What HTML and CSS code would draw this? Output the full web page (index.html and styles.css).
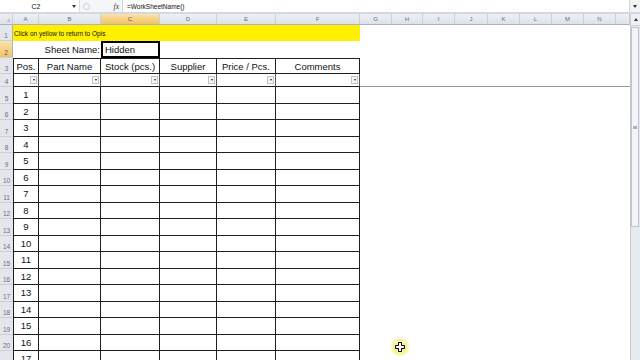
FILE: index.html
```html
<!DOCTYPE html>
<html lang="en">
<head>
  <meta charset="UTF-8">
  <title>Stock sheet</title>
  <link rel="stylesheet" href="styles.css">
</head>
<body>

  <div class="formula-bar">
    <div class="name-box">
      <span class="name">C2</span>
      <span class="nb-arrow"></span>
    </div>
    <div class="fb-tools">
      <span class="handle"></span>
      <i class="fx">fx</i>
    </div>
    <div class="formula">=WorkSheetName()</div>
    <div class="fb-expand"><span class="nb-arrow"></span></div>
  </div>

  <div class="workspace">
    <div class="sheet" id="sheet">
      <div class="row colhead">
        <div class="corner"><span class="corner-tri"></span></div>
        <div class="ch">A</div>
        <div class="ch">B</div>
        <div class="ch active">C</div>
        <div class="ch">D</div>
        <div class="ch">E</div>
        <div class="ch">F</div>
        <div class="ch">G</div>
        <div class="ch">H</div>
        <div class="ch">I</div>
        <div class="ch">J</div>
        <div class="ch">K</div>
        <div class="ch">L</div>
        <div class="ch">M</div>
        <div class="ch">N</div>
        <div class="ch"></div>
      </div>

      <div class="row r1">
        <div class="rh">1</div>
        <div class="banner">Click on yellow to return to Opis</div>
      </div>

      <div class="row r2">
        <div class="rh active">2</div>
        <div class="cell"></div>
        <div class="cell label">Sheet Name:</div>
        <div class="cell selected">Hidden</div>
      </div>

      <div class="row r3">
        <div class="rh">3</div>
        <div class="cell b first">Pos.</div>
        <div class="cell b">Part Name</div>
        <div class="cell b">Stock (pcs.)</div>
        <div class="cell b">Supplier</div>
        <div class="cell b">Price / Pcs.</div>
        <div class="cell b">Comments</div>
      </div>

      <div class="row r4">
        <div class="rh">4</div>
        <div class="cell b first filt"><span class="filter"></span></div>
        <div class="cell b filt"><span class="filter"></span></div>
        <div class="cell b filt"><span class="filter"></span></div>
        <div class="cell b filt"><span class="filter"></span></div>
        <div class="cell b filt"><span class="filter"></span></div>
        <div class="cell b filt"><span class="filter"></span></div>
        <div class="rest freeze"></div>
      </div>
      <!-- data rows are added by the script below -->
    </div>

    <div class="vscroll">
      <div class="vs-up"></div>
      <div class="vs-thumb"><span class="grip"></span></div>
    </div>
  </div>

  <div class="pointer">
    <svg width="10" height="10" viewBox="0 0 10 10">
      <path d="M3.5 0.5h3v3h3v3h-3v3h-3v-3h-3v-3h3z" fill="#fff" stroke="#000" stroke-width="1"/>
    </svg>
  </div>

  <script>
    const sheet = document.getElementById('sheet');

    // rows 5..21, numbered 1..17 in column A
    for (let i = 1; i <= 17; i++) {
      const row = document.createElement('div');
      row.className = 'row data';
      let html = '<div class="rh">' + (i + 4) + '</div>';
      html += '<div class="cell b first num">' + i + '</div>';
      for (let c = 0; c < 5; c++) {
        html += '<div class="cell b"></div>';
      }
      html += '<div class="rest"></div>';
      row.innerHTML = html;
      sheet.appendChild(row);
    }
  </script>
</body>
</html>
```

FILE: styles.css
```css
:root {
  --head-bg: #e3e7ec;
  --head-line: #c9d0d9;
  --head-edge: #a7b3c2;
  --head-text: #5f6e83;
  --active: #f5c973;
  --yellow: #fff000;
  --grid: #1e1e1e;
}

html, body {
  margin: 0;
  height: 100%;
  overflow: hidden;
  background: #fff;
}

body {
  font-family: "Liberation Sans", Arial, sans-serif;
  color: #111;
  position: relative;
}

/* formula bar */
.formula-bar {
  display: flex;
  height: 12px;
  border-bottom: 2px solid #d3d9e1;
  background: #fff;
  font-size: 6.5px;
}

.name-box {
  width: 80px;
  display: flex;
  align-items: center;
  border-right: 1px solid #d8dde4;
  box-sizing: border-box;
}

.name {
  flex: 1;
  text-align: center;
  font-size: 7px;
}

.nb-arrow {
  display: inline-block;
  width: 0;
  height: 0;
  border-left: 2px solid transparent;
  border-right: 2px solid transparent;
  border-top: 3px solid #333;
  margin-right: 3px;
}

.fb-tools {
  width: 43px;
  display: flex;
  align-items: center;
  background: #f5f6f8;
  border-right: 1px solid #d0d6de;
  box-sizing: border-box;
}

.handle {
  width: 5px;
  height: 5px;
  border: 1px solid #c8ccd2;
  border-radius: 50%;
  margin-left: 3px;
}

.fx {
  margin-left: auto;
  margin-right: 3px;
  font-family: "Liberation Serif", serif;
  font-size: 7.5px;
  color: #333;
}

.formula {
  flex: 1;
  display: flex;
  align-items: center;
  padding-left: 4px;
}

.fb-expand {
  width: 10px;
  display: flex;
  align-items: center;
  justify-content: center;
  border-left: 1px solid #cfd5dd;
  background: #f1f3f5;
}

.fb-expand .nb-arrow {
  margin: 0;
}

/* sheet */
.workspace {
  display: flex;
  height: calc(100% - 14px);
}

.sheet {
  width: 630px;
}

.row {
  display: grid;
  grid-template-columns: 13px 26px 62px 59px 57px 59px 84px 32px 31px 32px 33px 32px 32px 32px 32px 1fr;
}

.colhead { height: 11px; }
.r1 { height: 16px; }
.r2 { height: 17px; }
.r3 { height: 16px; }
.r4 { height: 13px; }
.data { height: 16.5px; }

.colhead > div {
  box-sizing: border-box;
  background: linear-gradient(#eef0f3, #dde2e8);
  border-right: 1px solid var(--head-line);
  border-bottom: 1px solid var(--head-edge);
}

.ch {
  display: flex;
  align-items: center;
  justify-content: center;
  font-size: 6px;
  color: var(--head-text);
}

.ch.active {
  background: linear-gradient(#fbe2ae, #f2c362);
  color: #555;
}

.corner {
  display: flex;
  align-items: flex-end;
  justify-content: flex-end;
  padding: 0 2px 2px 0;
}

.corner-tri {
  width: 0;
  height: 0;
  border-left: 4px solid transparent;
  border-bottom: 4px solid #b9c3cf;
}

.rh {
  box-sizing: border-box;
  background: var(--head-bg);
  border-bottom: 1px solid var(--head-line);
  border-right: 1px solid var(--head-edge);
  display: flex;
  align-items: flex-end;
  justify-content: center;
  padding-bottom: 1px;
  font-size: 6.5px;
  color: var(--head-text);
}

.rh.active {
  background: linear-gradient(#fbe2ae, #f2c362);
  color: #555;
}

.banner {
  grid-column: 2 / 8;
  background: var(--yellow);
  font-size: 6.5px;
  display: flex;
  align-items: center;
  padding-left: 1px;
}

.cell {
  box-sizing: border-box;
  display: flex;
  align-items: center;
  justify-content: center;
  font-size: 9.5px;
  white-space: nowrap;
}

.cell.b {
  border-right: 1px solid var(--grid);
  border-bottom: 1px solid var(--grid);
}

.cell.first {
  border-left: 1px solid var(--grid);
}

.r3 .cell.b {
  border-top: 1px solid var(--grid);
}

.r3 .rh, .r4 .rh, .data .rh {
  border-right: none;
}

.r4 .cell.b {
  border-right-color: #555;
}

.label {
  justify-content: flex-end;
  padding-right: 1px;
}

.selected {
  justify-content: flex-start;
  padding-left: 2px;
  border: 2px solid #000;
}

.filt {
  justify-content: flex-end;
  padding-right: 1px;
}

.filter {
  width: 7px;
  height: 8px;
  box-sizing: border-box;
  border: 1px solid #c3c3c3;
  background: #f6f6f6;
  display: flex;
  align-items: center;
  justify-content: center;
}

.filter::after {
  content: "";
  border-left: 1.5px solid transparent;
  border-right: 1.5px solid transparent;
  border-top: 2px solid #222;
}

.num {
  font-size: 9.5px;
}

.rest {
  grid-column: 8 / -1;
}

.rest.freeze {
  border-bottom: 1px solid #9a9a9a;
}

/* vertical scrollbar */
.vscroll {
  width: 10px;
  box-sizing: border-box;
  background: #e7eaee;
  border-left: 1px solid #c5ccd5;
  display: flex;
  flex-direction: column;
}

.vs-up {
  height: 11px;
  display: flex;
  align-items: center;
  justify-content: center;
  background: #eef0f3;
  border-bottom: 1px solid #cdd3db;
}

.vs-up::after {
  content: "";
  border-left: 2px solid transparent;
  border-right: 2px solid transparent;
  border-bottom: 3px solid #333;
}

.vs-thumb {
  height: 200px;
  box-sizing: border-box;
  margin: 1px 1px 0 0;
  background: #f2f4f7;
  border: 1px solid #bcc4ce;
  display: flex;
  align-items: center;
  justify-content: center;
}

.grip {
  width: 4px;
  height: 3px;
  background: #a9b2be;
}

/* mouse pointer with highlight */
.pointer {
  position: absolute;
  left: 390px;
  top: 337px;
  width: 20px;
  height: 20px;
  border-radius: 50%;
  background: radial-gradient(circle, #f4f08a 0%, #f7f4a8 55%, rgba(255, 255, 255, 0) 72%);
  display: flex;
  align-items: center;
  justify-content: center;
}
```
